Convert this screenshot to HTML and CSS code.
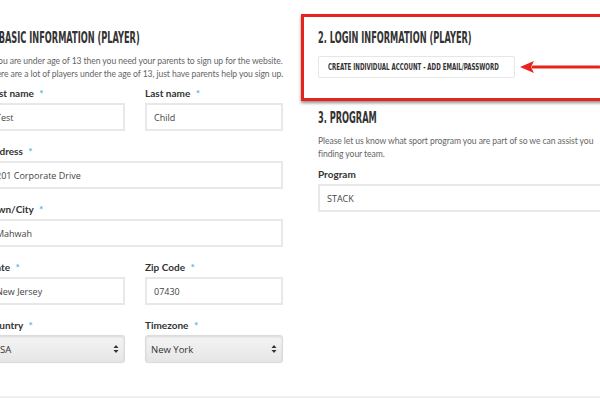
FILE: index.html
```html
<!DOCTYPE html>
<html lang="en">
<head>
    <meta charset="UTF-8">
    <title>Player Sign Up</title>
    <link rel="stylesheet" href="styles.css">
</head>
<body>
    <div class="signup">
        <div class="column">
            <h2 class="section-title"><span>1. BASIC INFORMATION (PLAYER)</span></h2>
            <p class="intro intro-lines">If you are under age of 13 then you need your parents to sign up for the website.<br>
            There are a lot of players under the age of 13, just have parents help you sign up.</p>

            <div class="row">
                <div class="field">
                    <label>First name <span class="req">*</span></label>
                    <input type="text" value="Test">
                </div>
                <div class="field">
                    <label>Last name <span class="req">*</span></label>
                    <input type="text" value="Child">
                </div>
            </div>
            <div class="field">
                <label>Address <span class="req">*</span></label>
                <input type="text" value="201 Corporate Drive">
            </div>
            <div class="field">
                <label>Town/City <span class="req">*</span></label>
                <input type="text" value="Mahwah">
            </div>
            <div class="row">
                <div class="field">
                    <label>State <span class="req">*</span></label>
                    <input type="text" value="New Jersey">
                </div>
                <div class="field">
                    <label>Zip Code <span class="req">*</span></label>
                    <input type="text" value="07430">
                </div>
            </div>
            <div class="row">
                <div class="field">
                    <label>Country <span class="req">*</span></label>
                    <div class="select-wrap">
                        <select><option>USA</option></select>
                        <svg class="select-arrows" width="6" height="10" viewBox="0 0 6 10"><path d="M3 1 L5.5 4 H0.5 Z M3 9 L5.5 6 H0.5 Z" fill="#333"/></svg>
                    </div>
                </div>
                <div class="field">
                    <label>Timezone <span class="req">*</span></label>
                    <div class="select-wrap">
                        <select><option>New York</option></select>
                        <svg class="select-arrows" width="6" height="10" viewBox="0 0 6 10"><path d="M3 1 L5.5 4 H0.5 Z M3 9 L5.5 6 H0.5 Z" fill="#333"/></svg>
                    </div>
                </div>
            </div>
        </div>

        <div class="column">
            <div class="login-box">
                <h2 class="section-title"><span>2. LOGIN INFORMATION (PLAYER)</span></h2>
                <div class="button-row">
                    <button class="account-btn"><span>CREATE INDIVIDUAL ACCOUNT - ADD EMAIL/PASSWORD</span></button>
                    <svg class="arrow" width="82" height="16" viewBox="0 0 82 16">
                        <path d="M14 8 H80" stroke="#e8231c" stroke-width="3" stroke-linecap="round"/>
                        <path d="M1 8 L15 2 L12 8 L15 14 Z" fill="#e8231c"/>
                    </svg>
                </div>
            </div>

            <h2 class="section-title program-title"><span>3. PROGRAM</span></h2>
            <p class="intro program-intro">Please let us know what sport program you are part of so we can assist you finding your team.</p>
            <div class="field">
                <label>Program</label>
                <input type="text" value="STACK">
            </div>
        </div>
    </div>
    <div class="bottom-rule"></div>
</body>
</html>
```

FILE: styles.css
```css
body {
    margin: 0;
    padding: 0;
    background-color: #fff;
    font-family: Lato, "Open Sans", sans-serif;
    color: #333;
    overflow: hidden;
}

.signup {
    display: grid;
    grid-template-columns: 296px 296px;
    column-gap: 35px;
    margin-left: -13px;
    padding-top: 14px;
}

.section-title {
    margin: 0;
    font-family: "DejaVu Sans Condensed", "DejaVu Sans", sans-serif;
    font-stretch: condensed;
    font-weight: bold;
    font-size: 15px;
    line-height: 18px;
    color: #333;
    white-space: nowrap;
    padding-top: 15px;
}

.section-title span {
    display: inline-block;
    transform: scaleX(0.61);
    transform-origin: left center;
}

.program-title {
    padding-top: 8px;
}

.intro {
    margin: 8px 0 5px;
    font-size: 8.6px;
    letter-spacing: -0.08px;
    line-height: 13px;
    color: #666;
}

.intro-lines {
    white-space: nowrap;
}

.program-intro {
    margin-bottom: 6px;
}

.row {
    display: grid;
    grid-template-columns: 1fr 1fr;
    column-gap: 20px;
}

.field {
    margin-bottom: 13px;
}

.field label {
    display: block;
    font-size: 10px;
    font-weight: bold;
    line-height: 14px;
    margin-bottom: 3px;
    color: #333;
}

.req {
    color: #4fb8e8;
    margin-left: 3px;
}

.field input {
    display: block;
    box-sizing: border-box;
    width: 100%;
    height: 28px;
    border: 2px solid #e8e8e8;
    padding: 0 7px;
    font-family: "Open Sans", sans-serif;
    font-size: 9px;
    color: #444;
    background: #fff;
    outline: none;
}

.select-wrap {
    position: relative;
}

.select-wrap select {
    display: block;
    box-sizing: border-box;
    width: 100%;
    height: 28px;
    appearance: none;
    -webkit-appearance: none;
    border: 1px solid #dcdcdc;
    border-radius: 3px;
    padding: 0 5px;
    font-family: "Open Sans", sans-serif;
    font-size: 9.5px;
    color: #333;
    background: linear-gradient(#f4f4f4, #e6e6e6);
    box-shadow: inset 0 1px 2px rgba(0, 0, 0, 0.12), 0 0 1px rgba(0, 0, 0, 0.15);
}

.select-arrows {
    position: absolute;
    right: 6px;
    top: 9px;
}

.login-box {
    margin: 0 0 0 -17px;
    padding: 0 0 20px 14px;
    border: 3px solid #e8231c;
    box-shadow: 0 2px 3px rgba(0, 0, 0, 0.45);
    width: 320px;
}

.login-box .section-title {
    padding-top: 12px;
}

.button-row {
    display: flex;
    align-items: center;
    gap: 4px;
    margin-top: 9px;
}

.account-btn {
    box-sizing: border-box;
    width: 197px;
    height: 22px;
    background: #fff;
    border: 1px solid #e6e6e6;
    border-radius: 2px;
    padding: 0 0 0 9px;
    text-align: left;
    font-family: "DejaVu Sans Condensed", "DejaVu Sans", sans-serif;
    font-stretch: condensed;
    font-weight: bold;
    font-size: 9px;
    color: #333;
    white-space: nowrap;
    overflow: hidden;
}

.account-btn span {
    display: inline-block;
    transform: scaleX(0.68);
    transform-origin: left center;
}

.bottom-rule {
    position: fixed;
    left: 0;
    right: 0;
    top: 396px;
    height: 2px;
    background: #efefef;
}
```
